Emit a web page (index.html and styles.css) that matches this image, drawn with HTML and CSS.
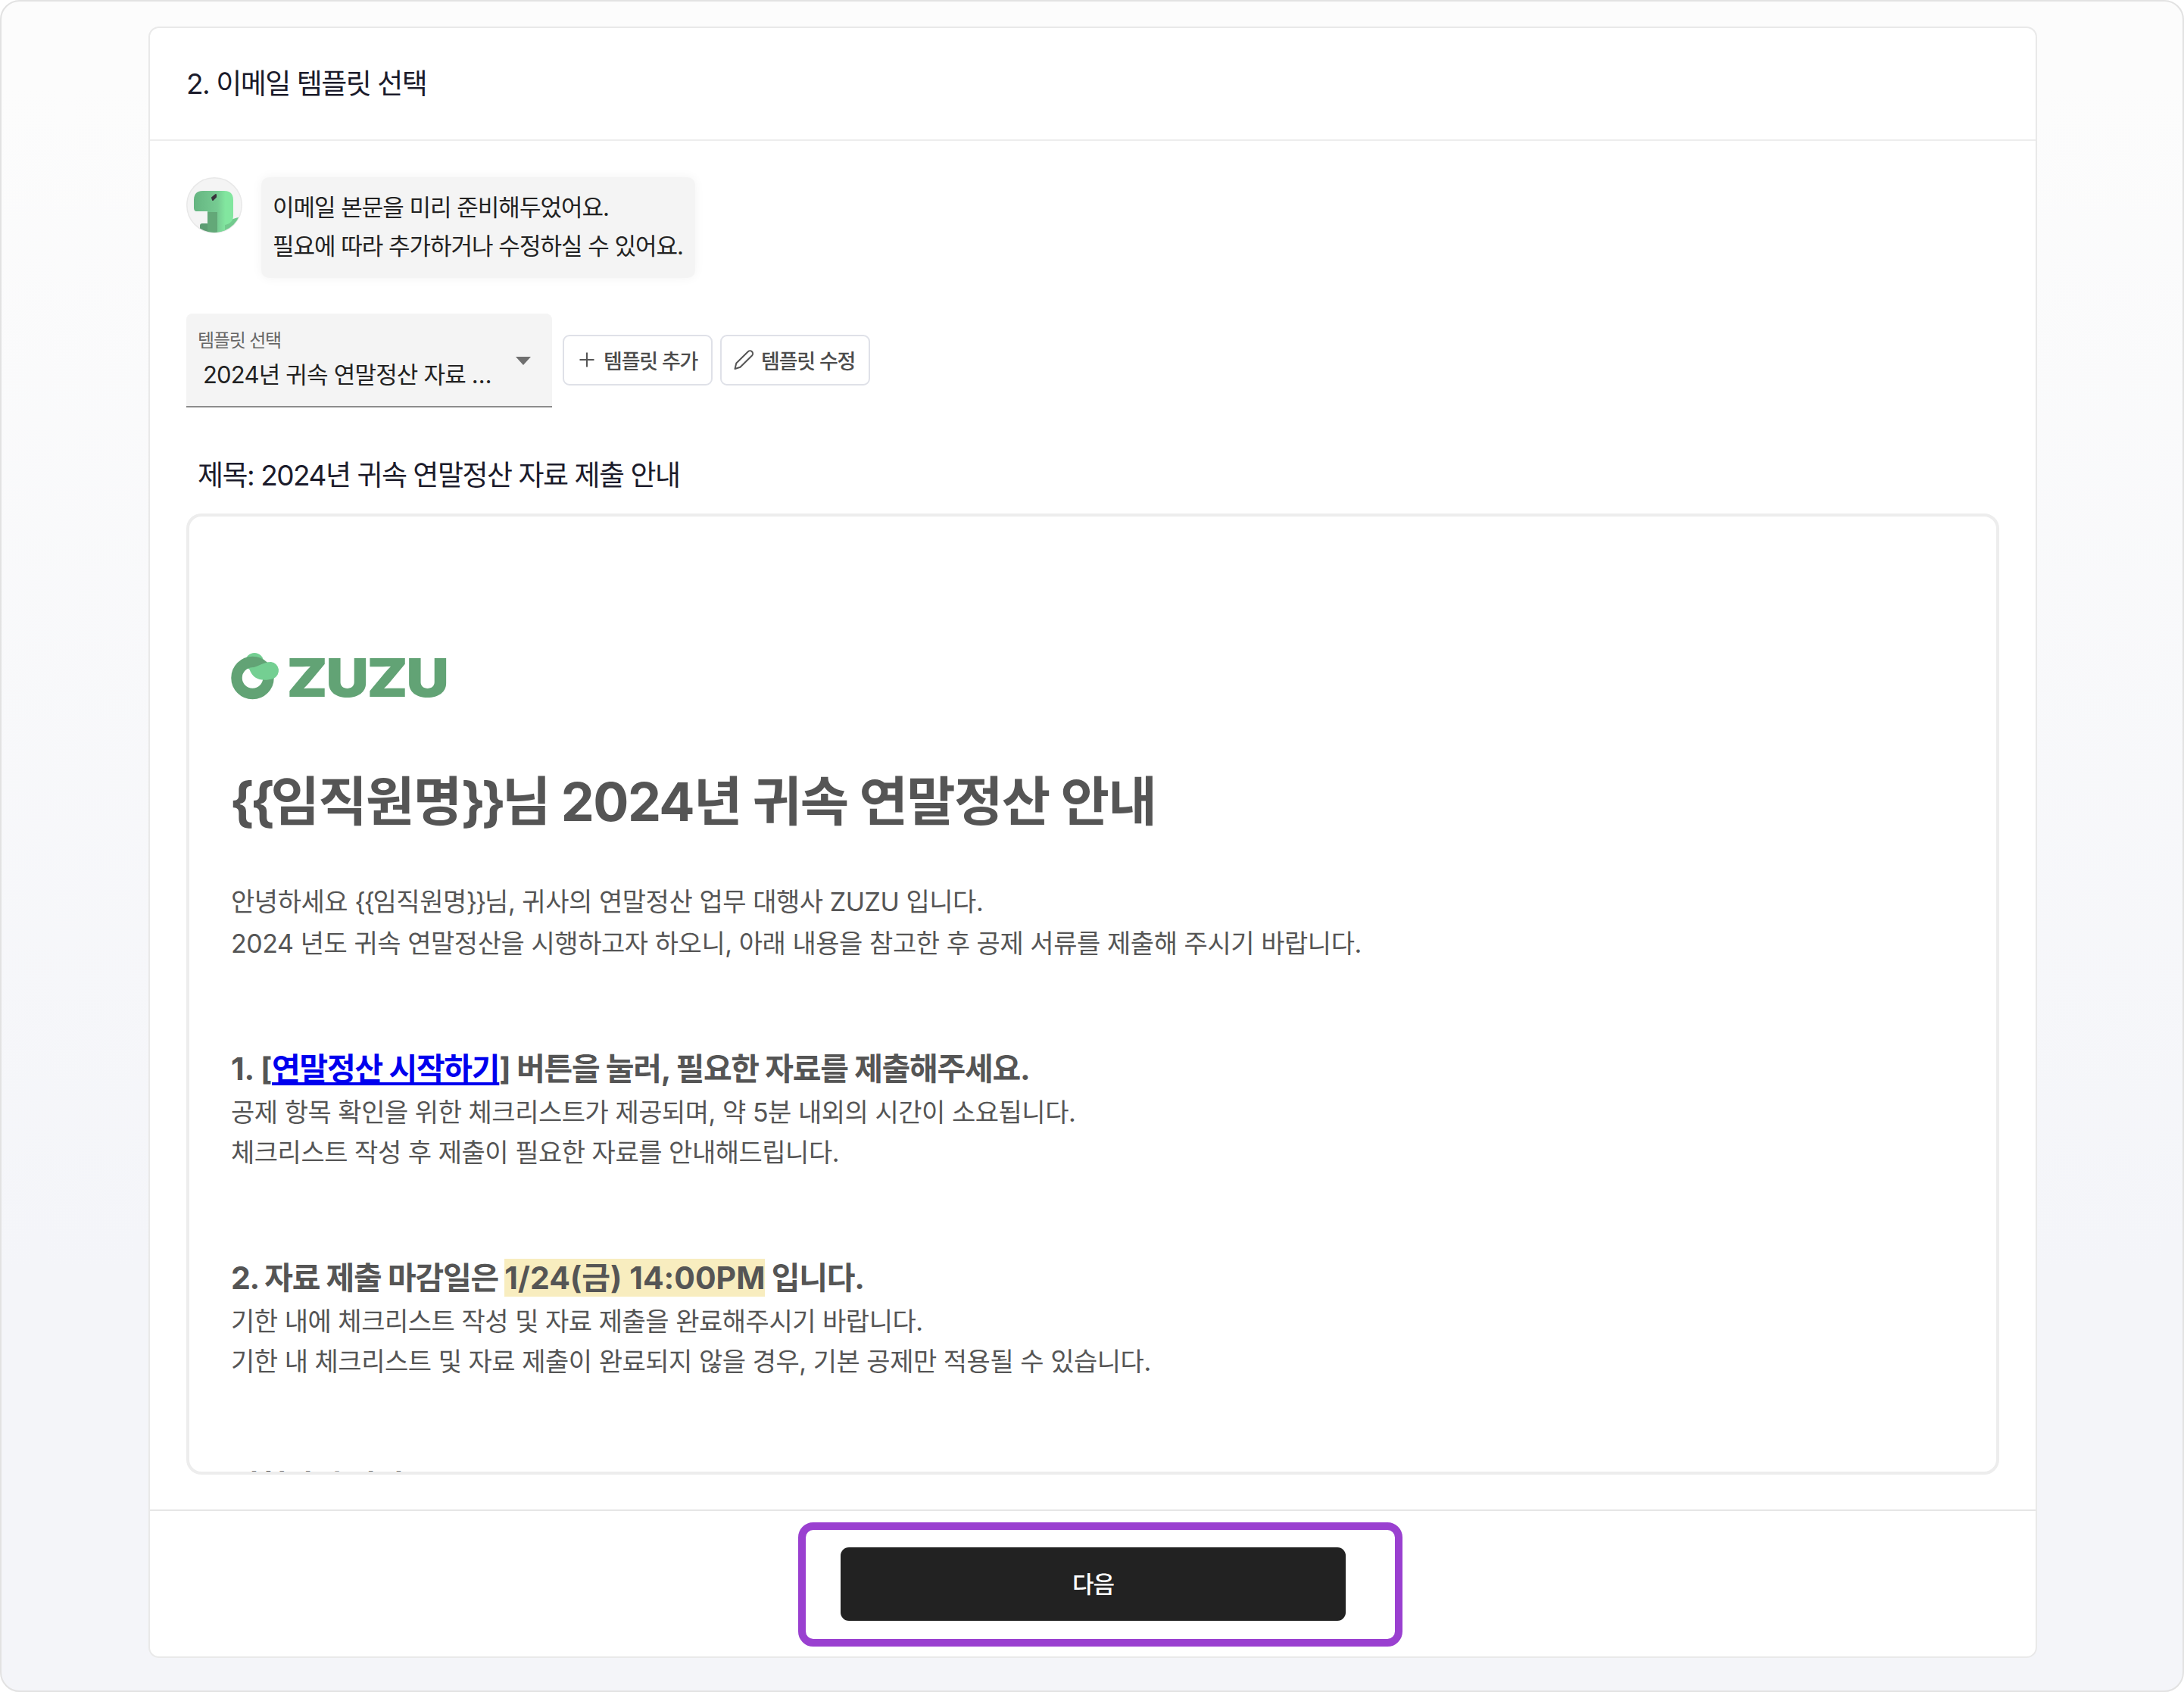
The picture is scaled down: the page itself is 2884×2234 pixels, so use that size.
FILE: index.html
```
<!DOCTYPE html>
<html lang="ko">
<head>
  <meta charset="UTF-8" />
  <meta name="viewport" content="width=device-width, initial-scale=1.0" />
  <title>이메일 템플릿 선택</title>
  <link rel="stylesheet" href="styles.css">
</head>
<body>
  <div class="frame">
    <main class="card">
      <header class="card-header">
        <h2>2. 이메일 템플릿 선택</h2>
      </header>

      <section class="card-body">
        <div class="guide">
          <svg class="avatar" viewBox="0 0 74 74">
            <defs>
              <clipPath id="avatarClip"><circle cx="37" cy="37" r="36" /></clipPath>
              <linearGradient id="dinoHead">
                <stop offset="0" stop-color="#65b581" />
                <stop offset="0.6" stop-color="#76cb92" />
                <stop offset="0.8" stop-color="#82e69f" />
                <stop offset="1" stop-color="#82e69f" />
              </linearGradient>
            </defs>
            <circle cx="37" cy="37" r="36.2" fill="#f4f4f4" stroke="#e8e8e8" stroke-width="1.5" />
            <g clip-path="url(#avatarClip)">
              <rect x="18" y="61" width="12" height="14" rx="3" fill="#5d9c72" />
              <path d="M44 58C54 60 62 54 69 53v8L56 76H40z" fill="#72ca8d" />
              <path d="M22 18h28c8 0 12 4 12 12v21c0 6-3 10-11 12v12H28V45H14c-3 0-4-2-4-5V30c0-8 4-12 12-12z" fill="url(#dinoHead)" />
              <path d="M28 46h13v28H28z" fill="#63a878" />
              <path d="M34 27l5-4v3l-4 4z" fill="#39323c" stroke="#39323c" stroke-width="2" stroke-linejoin="round" />
            </g>
          </svg>
          <p class="bubble">이메일 본문을 미리 준비해두었어요.<br>필요에 따라 추가하거나 수정하실 수 있어요.</p>
        </div>

        <div class="toolbar">
          <div class="select">
            <div class="select-text">
              <span class="select-label">템플릿 선택</span>
              <span class="select-value">2024년 귀속 연말정산 자료 …</span>
            </div>
            <svg class="caret" viewBox="0 0 20 11"><path d="M0 0h20L10 11z" fill="#6f6f6f" /></svg>
          </div>
          <button class="tool-btn">
            <svg class="icon" viewBox="0 0 26 26" fill="none" stroke="#555" stroke-width="2"><path d="M14 3.500v19M4.500 13h19" /></svg>
            템플릿 추가
          </button>
          <button class="tool-btn">
            <svg class="icon" viewBox="0 0 26 26" fill="none" stroke="#555" stroke-width="2" stroke-linejoin="round"><path d="M1.500 25l1.800-7.500L18.800 2.300a3.600 3.600 0 0 1 5.200 5.200L8.500 22.700z" /></svg>
            템플릿 수정
          </button>
        </div>

        <h3 class="subject">제목: 2024년 귀속 연말정산 자료 제출 안내</h3>

        <article class="preview">
          <svg class="logo" viewBox="0 0 290 64">
            <circle cx="31" cy="14" r="12" fill="#74cf92" />
            <circle cx="28.500" cy="35" r="21" fill="none" stroke="#62a375" stroke-width="14.500" />
            <path d="M24 22C34 22 42 14 53 14A11.500 11.500 0 0 1 56 36C42 40 28 38 24 22z" fill="#74cf92" />
            <text class="logo-text" x="73.500" y="60" textLength="212" lengthAdjust="spacingAndGlyphs">ZUZU</text>
          </svg>
          <h1><span class="brace">{{</span>임직원명<span class="brace">}}</span>님 2024년 귀속 연말정산 안내</h1>
          <p class="intro">안녕하세요 <span class="brace">{{</span>임직원명<span class="brace">}}</span>님, 귀사의 연말정산 업무 대행사 ZUZU 입니다.<br>2024 년도 귀속 연말정산을 시행하고자 하오니, 아래 내용을 참고한 후 공제 서류를 제출해 주시기 바랍니다.</p>

          <div class="step">
            <h4><span class="num">1. [</span><a href="#">연말정산 시작하기</a>] 버튼을 눌러, 필요한 자료를 제출해주세요.</h4>
            <p>공제 항목 확인을 위한 체크리스트가 제공되며, 약 5분 내외의 시간이 소요됩니다.<br>체크리스트 작성 후 제출이 필요한 자료를 안내해드립니다.</p>
          </div>
          <div class="step">
            <h4>2. 자료 제출 마감일은 <mark>1/24(금) 14:00PM</mark> 입니다.</h4>
            <p>기한 내에 체크리스트 작성 및 자료 제출을 완료해주시기 바랍니다.<br>기한 내 체크리스트 및 자료 제출이 완료되지 않을 경우, 기본 공제만 적용될 수 있습니다.</p>
          </div>
          <div class="step step-last">
            <h4>신청하기 이전</h4>
          </div>
        </article>
      </section>

      <footer class="card-footer">
        <div class="highlight">
          <button class="next-btn">다음</button>
        </div>
      </footer>
    </main>
  </div>
</body>
</html>
```
FILE: styles.css
```
:root {
  --ink: #1b1b2b;
  --text: #222;
  --mail: #555;
  --line: #ededed;
}
* {
  box-sizing: border-box;
  margin: 0;
  padding: 0;
}
body {
  font-family: Inter, "Noto Sans CJK KR", sans-serif;
  background: #fff;
  color: var(--text);
}
button {
  font-family: inherit;
}
.frame {
  height: 2234px;
  padding: 33px 192px 43px 194px;
  border: 2px solid #e2e2e2;
  border-radius: 26px;
  background: linear-gradient(#fcfcfc 5%, #f4f5f9 75%);
}
.card {
  display: flex;
  flex-direction: column;
  height: 2154px;
  background: #fff;
  border: 2px solid #e9e9e9;
  border-radius: 14px;
}
.card-header {
  height: 149px;
  padding: 0 48px;
  border-bottom: 2px solid var(--line);
}
.card-header h2 {
  font-size: 37px;
  font-weight: 400;
  line-height: 147px;
  letter-spacing: -1.5px;
  color: var(--ink);
}
.card-body {
  flex: 1;
  padding: 48px 48px 0;
}
.guide {
  display: flex;
  gap: 25px;
  height: 133px;
}
.avatar {
  width: 74px;
  height: 74px;
}
.bubble {
  width: 573px;
  padding: 14px 15px;
  border-radius: 10px;
  background: #f4f4f4;
  box-shadow: 0 0 14px rgba(0, 0, 0, 0.05);
  font-size: 31px;
  line-height: 51px;
  letter-spacing: -1px;
  white-space: nowrap;
}
.toolbar {
  display: flex;
  align-items: center;
  gap: 10px;
  margin-top: 47px;
}
.select {
  display: flex;
  align-items: center;
  justify-content: space-between;
  width: 483px;
  height: 124px;
  margin-right: 4px;
  padding: 0 28px 0 15px;
  background: #f4f4f4;
  border-bottom: 2px solid #8c8c8c;
  border-radius: 8px 8px 0 0;
}
.select-text {
  display: flex;
  flex-direction: column;
  padding-bottom: 6px;
  white-space: nowrap;
}
.select-label {
  font-size: 24px;
  line-height: 44px;
  letter-spacing: -1.2px;
  color: #666;
}
.select-value {
  padding-left: 7px;
  font-size: 31px;
  line-height: 45px;
  letter-spacing: -0.8px;
}
.caret {
  width: 20px;
  height: 11px;
  margin-top: 3px;
}
.tool-btn {
  display: flex;
  align-items: center;
  gap: 10px;
  width: 198px;
  height: 67px;
  margin-bottom: 2px;
  padding: 0 16px;
  background: #fff;
  border: 2px solid #dfe1e8;
  border-radius: 9px;
  font-size: 27px;
  font-weight: 500;
  letter-spacing: -1.2px;
  color: #4c4c4c;
  white-space: nowrap;
}
.icon {
  flex: none;
  width: 26px;
  height: 26px;
}
.subject {
  margin: 65px 0 25px;
  padding-left: 15px;
  font-size: 37px;
  font-weight: 400;
  line-height: 50px;
  letter-spacing: -1.5px;
  color: var(--ink);
}
.preview {
  height: 1269px;
  padding: 178px 55px 0;
  border: 4px solid var(--line);
  border-radius: 20px;
  color: var(--mail);
  overflow: hidden;
}
.logo {
  display: block;
  width: 290px;
  height: 64px;
}
.logo-text {
  font-size: 70px;
  font-weight: 900;
  letter-spacing: -2px;
  fill: #62a375;
}
.preview h1 {
  margin: 87px 0 0 -2px;
  font-size: 70px;
  font-weight: 700;
  line-height: 96px;
  letter-spacing: -1.6px;
}
.brace {
  letter-spacing: -0.07em;
}
h1 .brace {
  letter-spacing: -0.08em;
}
.intro {
  margin-top: 56px;
  font-size: 34px;
  line-height: 55px;
  letter-spacing: -0.45px;
}
.step {
  height: 276px;
}
.intro + .step {
  margin-top: 108px;
}
.step-last {
  margin-top: -1px;
}
.step h4 {
  font-size: 41px;
  font-weight: 700;
  line-height: 60px;
  letter-spacing: -1.25px;
}
.step .num {
  letter-spacing: -0.3px;
}
.step p {
  padding-top: 1px;
  font-size: 34px;
  line-height: 53px;
  letter-spacing: -0.48px;
}
.step a {
  color: #0000ee;
}
.step mark {
  background: #f8edbf;
  color: inherit;
  letter-spacing: 0;
}
.card-footer {
  display: flex;
  justify-content: center;
  height: 194px;
  padding: 15px 0 0 20px;
  border-top: 2px solid #e6e6e6;
}
.highlight {
  width: 798px;
  height: 164px;
  padding: 23px 46px;
  border: 10px solid #9a40d0;
  border-radius: 20px;
}
.next-btn {
  width: 667px;
  height: 97px;
  padding-bottom: 4px;
  border: none;
  border-radius: 11px;
  background: #222;
  color: #fff;
  font-size: 31px;
  font-weight: 500;
  letter-spacing: -1px;
}
```
